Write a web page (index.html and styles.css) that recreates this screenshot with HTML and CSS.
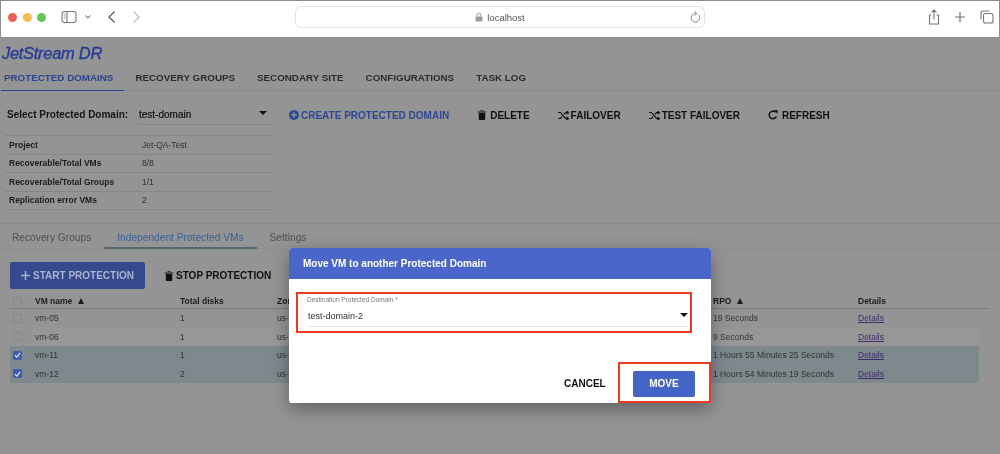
FILE: index.html
```html
<!DOCTYPE html>
<html lang="en">
<head>
<meta charset="utf-8">
<title>JetStream DR</title>
<link rel="stylesheet" href="styles.css">
</head>
<body>
<header class="chrome">
  <div class="lights"><i class="light red"></i><i class="light amber"></i><i class="light green"></i></div>
  <svg class="ico sidebar" viewBox="0 0 16 14" width="16" height="14"><rect x="1" y="1.5" width="14" height="11" rx="2.5" fill="none" stroke="#777" stroke-width="1.1"/><path d="M6 1.5v11" stroke="#777" stroke-width="1.1"/><path d="M2.6 4h2M2.6 6h2M2.6 8h2" stroke="#999" stroke-width="1"/></svg>
  <svg class="ico chev" viewBox="0 0 8 6" width="8" height="6"><path d="M1.5 1.5 4 4l2.5-2.5" fill="none" stroke="#888" stroke-width="1.1"/></svg>
  <svg class="ico back" viewBox="0 0 9 14" width="9" height="14"><path d="M7.5 1.5 2 7l5.5 5.5" fill="none" stroke="#555" stroke-width="1.2"/></svg>
  <svg class="ico fwd" viewBox="0 0 9 14" width="9" height="14"><path d="M1.5 1.5 7 7l-5.500 5.500" fill="none" stroke="#bbb" stroke-width="1.200"/></svg>
  <div class="url">
    <span class="url-text"><svg class="lock" viewBox="0 0 8 10" width="8" height="10"><path d="M2 4.500V3a2 2 0 0 1 4 0v1.500" fill="none" stroke="#999" stroke-width="1"/><rect x="0.500" y="4.500" width="7" height="5" rx="1" fill="#999"/></svg>localhost</span>
    <svg class="reload" viewBox="0 0 12 13" width="12" height="13"><path d="M9.700 4a4.300 4.300 0 1 1-3.200-1.500" fill="none" stroke="#888" stroke-width="1"/><path d="M5.500 0.500 8 2.500 5.500 4.500" fill="none" stroke="#888" stroke-width="1"/></svg>
  </div>
  <div class="chrome-right">
    <svg viewBox="0 0 12 16" width="12" height="16"><path d="M3.500 6H1.500v9h9V6h-2M6 10.500V1M3.500 3.300 6 1l2.500 2.300" fill="none" stroke="#777" stroke-width="1.100"/></svg>
    <svg viewBox="0 0 12 12" width="12" height="12"><path d="M6 1v10M1 6h10" stroke="#777" stroke-width="1.200"/></svg>
    <svg viewBox="0 0 14 14" width="14" height="14"><rect x="3.500" y="3.500" width="9.500" height="9.500" rx="2" fill="none" stroke="#777" stroke-width="1.100"/><path d="M1 9.500V3a2 2 0 0 1 2-2h6.500" fill="none" stroke="#777" stroke-width="1.100"/></svg>
  </div>
</header>

<main class="app">
  <div class="logo">JetStream DR</div>
  <nav class="tabs">
    <a class="tab active">PROTECTED DOMAINS</a>
    <a class="tab">RECOVERY GROUPS</a>
    <a class="tab">SECONDARY SITE</a>
    <a class="tab">CONFIGURATIONS</a>
    <a class="tab">TASK LOG</a>
  </nav>

  <section class="domain-bar">
    <span class="domain-label">Select Protected Domain:</span>
    <div class="domain-select"><span>test-domain</span><i class="caret"></i></div>
    <div class="actions">
      <span class="action primary"><svg viewBox="0 0 10 10" width="10" height="10"><circle cx="5" cy="5" r="5" fill="#2f4792"/><path d="M5 2.200v5.600M2.200 5h5.600" stroke="#949494" stroke-width="1.400"/></svg>CREATE PROTECTED DOMAIN</span>
      <span class="action del"><svg viewBox="0 0 8 10" width="8" height="10"><path d="M0 1.500h8V2.500H0zM2.500 1V.300h3V1zM.8 3h6.400v6.200a.8.8 0 0 1-.8.8H1.600a.8.8 0 0 1-.8-.8z" fill="#111"/></svg>DELETE</span>
      <span class="action fail"><svg viewBox="0 0 11 9" width="11" height="9"><path d="M0 1.500h2.500l5 6H10M0 7.500h2.500l1.500-1.800M6 3.300l1.500-1.800H10M8.500 0 10.500 1.500 8.500 3M8.500 6l2 1.500-2 1.500" fill="none" stroke="#111" stroke-width="1.200"/></svg>FAILOVER</span>
      <span class="action fail"><svg viewBox="0 0 11 9" width="11" height="9"><path d="M0 1.500h2.500l5 6H10M0 7.500h2.500l1.500-1.800M6 3.300l1.500-1.800H10M8.500 0 10.500 1.500 8.500 3M8.500 6l2 1.500-2 1.500" fill="none" stroke="#111" stroke-width="1.200"/></svg>TEST FAILOVER</span>
      <span class="action refresh"><svg viewBox="0 0 10 10" width="10" height="10"><path d="M8.400 6.500A3.800 3.800 0 1 1 7.600 2.200" fill="none" stroke="#111" stroke-width="1.500"/><path d="M6 0l3.800.2-.3 3.600z" fill="#111"/></svg>REFRESH</span>
    </div>
  </section>

  <table class="info">
    <tr><th>Project</th><td>Jet-QA-Test</td></tr>
    <tr><th>Recoverable/Total VMs</th><td>8/8</td></tr>
    <tr><th>Recoverable/Total Groups</th><td>1/1</td></tr>
    <tr><th>Replication error VMs</th><td>2</td></tr>
  </table>

  <nav class="subtabs">
    <a class="subtab">Recovery Groups</a>
    <a class="subtab active">Independent Protected VMs</a>
    <a class="subtab">Settings</a>
  </nav>

  <div class="vm-actions">
    <span class="start"><svg viewBox="0 0 9 9" width="9" height="9"><path d="M4.500 0v9M0 4.500h9" stroke="#a9b2cf" stroke-width="1.500"/></svg>START PROTECTION</span>
    <span class="stop"><svg viewBox="0 0 8 10" width="8" height="10"><path d="M0 1.500h8V2.500H0zM2.500 1V.300h3V1zM.8 3h6.400v6.200a.8.8 0 0 1-.8.8H1.600a.8.8 0 0 1-.8-.8z" fill="#111"/></svg>STOP PROTECTION</span>
  </div>

  <table class="vms">
    <thead>
      <tr><th class="c-check"><i class="box"></i></th><th class="c-name">VM name <i class="sort"></i></th><th class="c-disks">Total disks</th><th class="c-zone">Zone</th><th class="c-rpo">RPO <i class="sort"></i></th><th class="c-details">Details</th></tr>
    </thead>
    <tbody>
      <tr><td class="c-check"><i class="box"></i></td><td>vm-05</td><td>1</td><td>us-</td><td>19 Seconds</td><td><a class="link">Details</a></td></tr>
      <tr class="even"><td class="c-check"><i class="box"></i></td><td>vm-06</td><td>1</td><td>us-</td><td>9 Seconds</td><td><a class="link">Details</a></td></tr>
      <tr class="sel"><td class="c-check"><i class="box on"><svg viewBox="0 0 8 8" width="8" height="8"><path d="M1 4.200 3.200 6.500 7 1.500" fill="none" stroke="#dfe4f2" stroke-width="1.300"/></svg></i></td><td>vm-11</td><td>1</td><td>us-</td><td>1 Hours 55 Minutes 25 Seconds</td><td><a class="link">Details</a></td></tr>
      <tr class="sel"><td class="c-check"><i class="box on"><svg viewBox="0 0 8 8" width="8" height="8"><path d="M1 4.200 3.200 6.500 7 1.500" fill="none" stroke="#dfe4f2" stroke-width="1.300"/></svg></i></td><td>vm-12</td><td>2</td><td>us-</td><td>1 Hours 54 Minutes 19 Seconds</td><td><a class="link">Details</a></td></tr>
    </tbody>
  </table>
</main>

<div class="dialog" role="dialog">
  <h2 class="dialog-title">Move VM to another Protected Domain</h2>
  <div class="dialog-body">
    <div class="field callout">
      <label class="field-label">Destination Protected Domain *</label>
      <div class="field-input"><span>test-domain-2</span><i class="caret"></i></div>
    </div>
  </div>
  <div class="dialog-foot">
    <span class="cancel">CANCEL</span>
    <div class="move-wrap callout"><span class="move">MOVE</span></div>
  </div>
</div>
</body>
</html>
```

FILE: styles.css
```css
* { box-sizing: border-box; }
html, body { margin: 0; height: 454px; overflow: hidden; }
body { position: relative; background: #949494; font-family: "Liberation Sans", Arial, sans-serif; color: #151515; }

.chrome { height: 38px; background: #fff; border: 1px solid #8e8e8e; display: flex; align-items: center; padding: 0 0 4px 7px; position: relative; filter: blur(.3px); }
.lights { display: flex; gap: 5.500px; }
.light { width: 9px; height: 9px; border-radius: 50%; display: block; }
.red { background: #ee5f57; }
.amber { background: #f5bd4f; }
.green { background: #62c554; }
.ico { display: block; flex: none; }
.sidebar { margin-left: 15px; }
.chev { margin-left: 7px; }
.back { margin-left: 15px; }
.fwd { margin-left: 16px; }
.url { position: absolute; left: 294px; top: 5px; width: 410px; height: 22px; border: 1px solid #e3e3e3; border-radius: 6px; display: flex; align-items: center; justify-content: center; font-size: 9.500px; color: #555; }
.url-text { display: flex; align-items: center; gap: 4px; }
.reload { position: absolute; right: 3px; top: 4px; }
.chrome-right { margin-left: auto; margin-right: 5px; display: flex; align-items: center; gap: 14px; }

.app { filter: blur(.4px); }
.logo { font-style: italic; font-size: 16.500px; color: #223a96; padding: 6px 0 0 2px; height: 27px; letter-spacing: -.3px; -webkit-text-stroke: .3px #223a96; }
.tabs { display: flex; height: 26px; border-bottom: 1px solid #8a8a8a; padding-top: 7px; }
.tab { font-size: 9.800px; font-weight: 700; color: #2c2c2c; margin-left: 22px; white-space: nowrap; }
.tab.active { color: #2d4490; margin-left: 1px; padding: 0 11px 0 3px; border-bottom: 1px solid #2d4490; height: 19px; }
.tab.active + .tab { margin-left: 11px; }

.domain-bar { display: flex; align-items: flex-start; height: 44px; padding: 18px 0 0 7px; }
.domain-label { font-size: 10px; font-weight: 700; width: 131px; }
.domain-select { width: 134px; height: 16px; border-bottom: 1px solid #868686; display: flex; justify-content: space-between; padding: 0 5px 0 1px; font-size: 10px; color: #111; -webkit-text-stroke: .2px #111; }
.caret { display: block; width: 0; height: 0; border: 4px solid transparent; border-top: 4.500px solid #111; border-bottom: 0; margin-top: 2px; }
.actions { display: flex; margin-left: 17px; font-size: 10px; font-weight: 700; color: #111; }
.action { display: flex; align-items: center; gap: 4px; height: 12px; margin-left: 29px; white-space: nowrap; }
.action:first-child { margin-left: 0; }
.action.primary { color: #2f4792; gap: 2px; }
.action.fail { gap: 2px; margin-left: 28px; }
.action.refresh { margin-left: 28px; }

.info { border-collapse: collapse; margin: 0 0 0 5px; width: 268px; font-size: 8.500px; color: #333; }
.info tr { height: 18.500px; border-top: 1px solid #868686; }
.info tr:last-child { border-bottom: 1px solid #868686; }
.info th { width: 137px; text-align: left; font-weight: 700; padding: 0 0 0 4px; color: #1d1d1d; }
.info td { padding: 0; }

.subtabs { display: flex; margin-top: 13px; height: 26px; border-top: 1px solid #8a8a8a; border-bottom: 1px solid #8e8e8e; padding-top: 8px; font-size: 10.200px; color: #4f4f4f; }
.subtab { padding: 0 13px; height: 17px; white-space: nowrap; }
.subtab:first-child { padding-left: 12px; }
.subtab.active { color: #3a5f98; border-bottom: 2px solid #54676f; }

.vm-actions { display: flex; align-items: center; padding: 13px 0 0 10px; height: 40px; font-size: 10px; font-weight: 700; }
.start { width: 135px; height: 27px; background: #344a8d; color: #a9b2cf; border-radius: 2px; display: flex; align-items: center; justify-content: center; gap: 3px; }
.stop { display: flex; align-items: center; gap: 3px; margin-left: 20px; color: #111; }

.vms { border-collapse: collapse; table-layout: fixed; margin: 0 0 0 10px; width: 969px; font-size: 8.500px; color: #333; }
.vms th { height: 20px; text-align: left; font-weight: 700; color: #1d1d1d; padding: 4px 3px 0; box-shadow: inset 0 -1px 0 #7a7a7a; }
.vms td { height: 18.500px; padding: 0 3px; }
.vms .c-check { width: 22px; padding: 0 0 0 3px; }
.vms th.c-check { padding-top: 4px; }
.c-name { width: 145px; }
.c-disks { width: 97px; }
.c-zone { width: 436px; }
.c-rpo { width: 145px; }
.c-details { position: relative; }
.c-details::after { content: ""; position: absolute; left: 100%; bottom: 0; width: 10px; height: 1px; background: #7a7a7a; }
.even td { background: #979797; }
.even td.c-check { background: #949494; }
.sel td { background: #7e888d; }
.box { display: block; width: 9px; height: 9px; border: 1px solid #868686; border-radius: 1.500px; }
.box.on { background: #3f5da8; border-color: #3f5da8; display: flex; align-items: center; justify-content: center; }
.sort { display: inline-block; width: 0; height: 0; margin-left: 3px; border: 3.500px solid transparent; border-bottom: 6px solid #1d1d1d; border-top: 0; }
.link { color: #3f2c6e; text-decoration: underline; }

.dialog { position: absolute; left: 289px; top: 248px; width: 422px; height: 155px; background: #fff; border-radius: 3px; box-shadow: 0 6px 18px rgba(0,0,0,.35); display: flex; flex-direction: column; filter: blur(.3px); }
.dialog-title { margin: 0; height: 31px; background: #4a66cb; color: #fff; font-size: 10px; font-weight: 700; padding: 10px 0 0 14px; border-radius: 3px 3px 0 0; }
.dialog-body { padding: 13px 19px 0 7px; height: 81px; }
.callout { border: 2px solid #e83a25; }
.field { height: 41px; padding: 0 2px 0 9px; }
.field-label { display: block; font-size: 6.500px; color: #777; padding-top: 2px; line-height: 8px; }
.field-input { display: flex; justify-content: space-between; height: 22px; border-bottom: 1px solid #e4e4e4; font-size: 9px; color: #333; padding: 6px 0 0 1px; margin-top: 1px; }
.dialog-foot { position: relative; height: 43px; display: flex; justify-content: flex-end; align-items: flex-end; }
.cancel { position: absolute; left: 275px; top: 18px; font-size: 10px; font-weight: 700; color: #111; }
.move-wrap { width: 93px; height: 41px; padding: 2px 0 0 13px; display: flex; align-items: center; }
.move { width: 62px; height: 26px; background: #4565c6; color: #fff; border-radius: 2px; font-size: 10px; font-weight: 700; display: flex; align-items: center; justify-content: center; }
```
